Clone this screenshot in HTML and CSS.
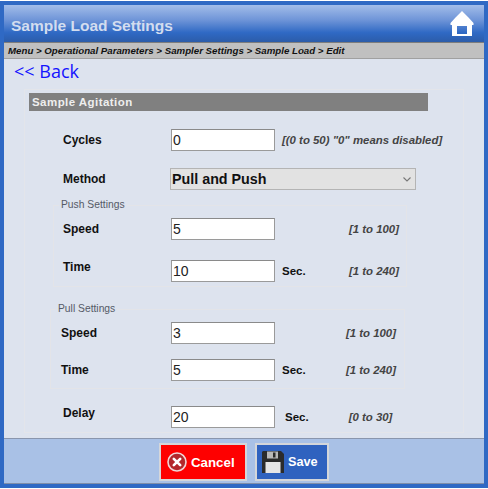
FILE: index.html
```html
<!DOCTYPE html>
<html>

<head>
    <meta charset="UTF-8">
    <title>Sample Load Settings</title>
    <link rel="stylesheet" href="styles.css">
</head>

<body>
    <div class="app">
        <div class="header">
            <span class="header-title">Sample Load Settings</span>
            <svg class="home-icon" width="24" height="26" viewBox="0 0 24 26">
                <path fill="#fff" fill-rule="evenodd" d="M12 0 L18.5 6.5 L23.5 12 L23.5 14 L22 14 L22 25 L2 25 L2 14 L0.5 14 L0.5 12 L5.5 6.5 Z M7 15 L7 23 L17 23 L17 15 Z" />
            </svg>
        </div>
        <div class="crumbs">Menu &gt; Operational Parameters &gt; Sampler Settings &gt; Sample Load &gt; Edit</div>

        <div class="content">
            <a class="back" href="#">&lt;&lt; Back</a>

            <div class="panel">
                <div class="panel-title">Sample Agitation</div>

                <div class="row row-cycles">
                    <label class="row-label">Cycles</label>
                    <input class="field" type="text" value="0">
                    <span class="hint hint-inline">[(0 to 50) "0" means disabled]</span>
                </div>

                <div class="row row-method">
                    <label class="row-label">Method</label>
                    <select class="method-select">
                        <option>Pull and Push</option>
                    </select>
                </div>

                <fieldset class="group group-push">
                    <legend>Push Settings</legend>
                    <div class="row row-first">
                        <label class="row-label">Speed</label>
                        <input class="field" type="text" value="5">
                        <span class="hint">[1 to 100]</span>
                    </div>
                    <div class="row row-second">
                        <label class="row-label label-raised">Time</label>
                        <input class="field" type="text" value="10">
                        <span class="unit">Sec.</span>
                        <span class="hint">[1 to 240]</span>
                    </div>
                </fieldset>

                <fieldset class="group group-pull">
                    <legend>Pull Settings</legend>
                    <div class="row row-first">
                        <label class="row-label">Speed</label>
                        <input class="field" type="text" value="3">
                        <span class="hint">[1 to 100]</span>
                    </div>
                    <div class="row row-second-pull">
                        <label class="row-label">Time</label>
                        <input class="field" type="text" value="5">
                        <span class="unit">Sec.</span>
                        <span class="hint">[1 to 240]</span>
                    </div>
                </fieldset>

                <div class="row row-delay">
                    <label class="row-label label-raised">Delay</label>
                    <input class="field" type="text" value="20">
                    <span class="unit unit-delay">Sec.</span>
                    <span class="hint hint-delay">[0 to 30]</span>
                </div>
            </div>
        </div>

        <div class="footer">
            <button class="btn btn-cancel" type="button">
                <svg width="20" height="20" viewBox="0 0 20 20">
                    <circle cx="10" cy="10" r="9" fill="#b3272b" stroke="#f0d6d6" stroke-width="1.6" />
                    <path d="M6.8 6.8 L13.2 13.2 M13.2 6.8 L6.8 13.2" stroke="#fff" stroke-width="2.6" stroke-linecap="round" />
                </svg>
                Cancel
            </button>
            <button class="btn btn-save" type="button">
                <svg width="22" height="22" viewBox="0 0 22 22">
                    <path fill="#2b2b2b" d="M1 0 H19 L22 3 V22 H0 V1 Z" />
                    <rect x="5" y="0.5" width="11" height="7" fill="#b9b9b9" />
                    <rect x="11" y="1.5" width="2.5" height="5" fill="#2b2b2b" />
                    <rect x="3.5" y="11" width="15" height="11" fill="#e6e6e6" />
                </svg>
                Save
            </button>
        </div>
    </div>
</body>

</html>
```

FILE: styles.css
```css
html,
body {
    margin: 0;
    padding: 0;
    background-color: #fff;
}

body {
    font-family: "Liberation Sans", Arial, sans-serif;
    padding-top: 1px;
}

.app {
    box-sizing: border-box;
    width: 488px;
    height: 487px;
    border: 4px solid #2f69c4;
    display: flex;
    flex-direction: column;
}

.header {
    height: 37px;
    flex: none;
    display: flex;
    align-items: center;
    justify-content: space-between;
    padding: 0 10px 0 7px;
    box-sizing: border-box;
    background: linear-gradient(#a3bde9 0%, #6f95d8 40%, #2f69c4 75%, #2c5ca9 100%);
}

.header-title {
    color: #d3ddef;
    font-size: 15.5px;
    font-weight: bold;
    padding-top: 4px;
}

.home-icon {
    display: block;
}

.crumbs {
    height: 17px;
    flex: none;
    box-sizing: border-box;
    border-top: 1px solid #7d7d7d;
    border-bottom: 1px solid #a0a0a0;
    background-color: #c0c0c0;
    color: #111;
    font-size: 9.7px;
    font-weight: bold;
    font-style: italic;
    line-height: 16px;
    padding-left: 4px;
    white-space: nowrap;
}

.content {
    height: 379px;
    flex: none;
    box-sizing: border-box;
    background-color: #dde3ee;
    padding: 0 20px;
}

.back {
    display: block;
    height: 30px;
    box-sizing: border-box;
    margin-left: -10px;
    color: #1414ff;
    font-family: "Open Sans", sans-serif;
    font-size: 18px;
    line-height: 24px;
    text-decoration: none;
}

.panel {
    box-sizing: border-box;
    height: 344px;
    border: 1px solid #e3e5ea;
    padding: 3px 4px 0;
}

.panel-title {
    width: 399px;
    height: 18px;
    box-sizing: border-box;
    background-color: #808080;
    color: #eee;
    font-size: 11.5px;
    font-weight: bold;
    letter-spacing: 0.45px;
    line-height: 18px;
    padding-left: 3px;
}

.row {
    display: flex;
    align-items: center;
    height: 22px;
    font-size: 12px;
    font-weight: bold;
    color: #111;
}

.row-label {
    width: 108px;
    flex: none;
}

.label-raised {
    padding-bottom: 8px;
}

.row-cycles {
    margin-top: 18px;
    padding-left: 34px;
}

.row-method {
    margin-top: 17px;
    padding-left: 34px;
}

.field {
    box-sizing: border-box;
    width: 104px;
    height: 22px;
    flex: none;
    margin: 0;
    border: 1px solid #9a9a9a;
    border-top-color: #8a8a8a;
    background-color: #fff;
    color: #222;
    font-family: "Liberation Sans", Arial, sans-serif;
    font-size: 14px;
    padding: 0 1px;
}

.method-select {
    box-sizing: border-box;
    width: 246px;
    height: 22px;
    margin: 0 0 0 -1px;
    border: 1px solid #b4b4b4;
    border-radius: 0;
    appearance: none;
    background-color: #e2e2e2;
    background-image: url("data:image/svg+xml,%3Csvg xmlns='http://www.w3.org/2000/svg' width='8' height='5'%3E%3Cpath d='M.5.5 4 4 7.5.5' fill='none' stroke='%23777' stroke-width='1.1'/%3E%3C/svg%3E");
    background-repeat: no-repeat;
    background-position: right 4px center;
    color: #111;
    font-family: "Liberation Sans", Arial, sans-serif;
    font-size: 14.3px;
    font-weight: bold;
    padding-left: 1px;
}

.hint {
    margin-left: auto;
    color: #444;
    font-size: 11.4px;
    font-style: italic;
    white-space: nowrap;
}

.hint-inline {
    margin-left: 7px;
}

.hint-delay {
    margin-left: 40px;
}

.unit {
    margin-left: 7px;
    font-size: 11.5px;
}

.unit-delay {
    margin-left: 10px;
}

.group {
    box-sizing: border-box;
    margin: 0;
    min-width: 0;
    border: 1px solid #e3e4e8;
}

.group legend {
    color: #555a66;
    font-size: 10.3px;
    padding: 0 2px;
    line-height: 12px;
}

.group-push {
    width: 354px;
    height: 88px;
    margin: 9px 0 0 24px;
    padding: 0 7px 0 9px;
}

.group-push legend {
    margin-left: -4px;
}

.group-pull {
    width: 355px;
    height: 86px;
    margin: 16px 0 0 21px;
    padding: 0 8px 0 10px;
}

.group-pull legend {
    margin-left: -5px;
}

.group-pull .row-label {
    width: 110px;
}

.row-first {
    margin-top: 7px;
}

.row-second {
    margin-top: 20px;
}

.row-second-pull {
    margin-top: 15px;
}

.row-delay {
    margin-top: 17px;
    padding-left: 34px;
}

.footer {
    flex: 1;
    box-sizing: border-box;
    border-top: 1px solid #8a96ad;
    border-bottom: 1px solid #7f8ea9;
    background-color: #a9c1e6;
    display: flex;
    gap: 8px;
    padding: 4px 0 0 155px;
}

.btn {
    box-sizing: border-box;
    height: 38px;
    display: flex;
    align-items: center;
    border: 2px solid #d4d6da;
    color: #fff;
    font-family: "Liberation Sans", Arial, sans-serif;
    font-size: 13.3px;
    font-weight: bold;
    cursor: pointer;
}

.btn-cancel {
    width: 88px;
    background-color: #fe0000;
    gap: 4px;
    padding: 0 0 0 6px;
}

.btn-save {
    width: 74px;
    background-color: #2f62bf;
    gap: 4px;
    padding: 0 0 0 5px;
    font-size: 12.7px;
}
```
